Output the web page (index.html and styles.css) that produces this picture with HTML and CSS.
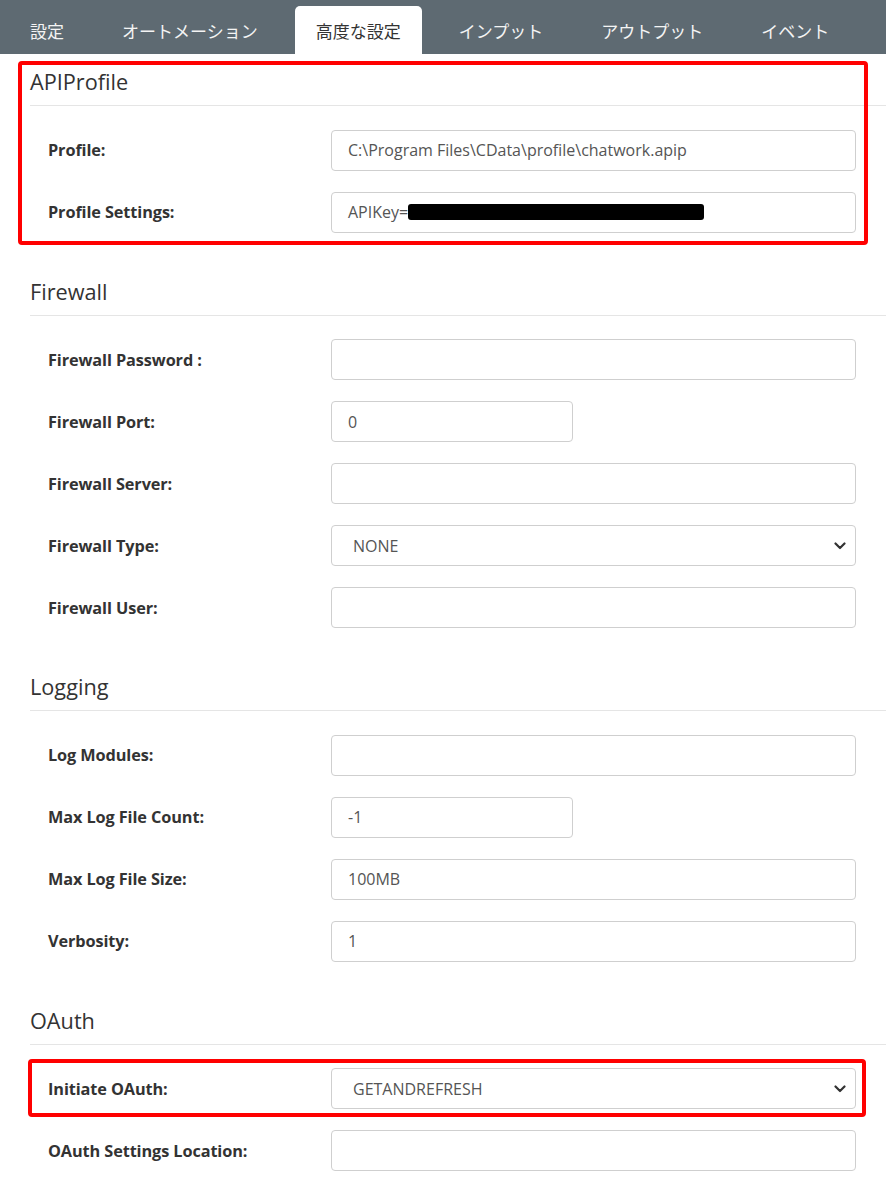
FILE: index.html
```html
<!DOCTYPE html>
<html lang="ja">
<head>
<meta charset="utf-8">
<title>高度な設定</title>
<link rel="stylesheet" href="styles.css">
</head>
<body>
<nav class="tabs">
  <span class="tab">設定</span>
  <span class="tab">オートメーション</span>
  <span class="tab active">高度な設定</span>
  <span class="tab">インプット</span>
  <span class="tab">アウトプット</span>
  <span class="tab">イベント</span>
</nav>
<main class="content">
  <section class="group">
    <h2 class="group-title">APIProfile</h2>
    <div class="fields">
      <div class="field"><span class="label">Profile:</span><div class="control">C:\Program Files\CData\profile\chatwork.apip</div></div>
      <div class="field"><span class="label">Profile Settings:</span><div class="control">APIKey=<span class="redact"></span></div></div>
    </div>
    <div class="callout callout-group"></div>
  </section>

  <section class="group">
    <h2 class="group-title">Firewall</h2>
    <div class="fields">
      <div class="field"><span class="label">Firewall Password :</span><div class="control"></div></div>
      <div class="field"><span class="label">Firewall Port:</span><div class="control narrow">0</div></div>
      <div class="field"><span class="label">Firewall Server:</span><div class="control"></div></div>
      <div class="field"><span class="label">Firewall Type:</span><div class="control select">NONE<svg class="chev" viewBox="0 0 12 8" width="12" height="8"><path d="M1.5 1.5 L6 6 L10.5 1.5" fill="none" stroke="#333" stroke-width="2.2" stroke-linecap="round" stroke-linejoin="round"/></svg></div></div>
      <div class="field"><span class="label">Firewall User:</span><div class="control"></div></div>
    </div>
  </section>

  <section class="group">
    <h2 class="group-title">Logging</h2>
    <div class="fields">
      <div class="field"><span class="label">Log Modules:</span><div class="control"></div></div>
      <div class="field"><span class="label">Max Log File Count:</span><div class="control narrow">-1</div></div>
      <div class="field"><span class="label">Max Log File Size:</span><div class="control">100MB</div></div>
      <div class="field"><span class="label">Verbosity:</span><div class="control">1</div></div>
    </div>
  </section>

  <section class="group">
    <h2 class="group-title">OAuth</h2>
    <div class="fields">
      <div class="field"><span class="label">Initiate OAuth:</span><div class="control select">GETANDREFRESH<svg class="chev" viewBox="0 0 12 8" width="12" height="8"><path d="M1.5 1.5 L6 6 L10.5 1.5" fill="none" stroke="#333" stroke-width="2.2" stroke-linecap="round" stroke-linejoin="round"/></svg></div><div class="callout callout-row"></div></div>
      <div class="field"><span class="label">OAuth Settings Location:</span><div class="control"></div></div>
    </div>
  </section>
</main>
</body>
</html>
```

FILE: styles.css
```css
* { box-sizing: border-box; }

body {
  margin: 0;
  background: #ffffff;
  font-family: "Open Sans", "Noto Sans", "Noto Sans CJK JP", sans-serif;
  color: #333333;
}

.tabs {
  display: flex;
  align-items: flex-end;
  gap: 16px;
  height: 54px;
  padding-left: 9px;
  background: #5e6a72;
}

.tab {
  display: flex;
  align-items: center;
  height: 48px;
  padding: 0 21px 0 21px;
  font-family: "Noto Sans CJK JP", sans-serif;
  font-size: 17px;
  color: #f4f4f4;
  border-radius: 5px 5px 0 0;
}

.tab.active {
  background: #ffffff;
  color: #333333;
}

.content {
  padding: 14px 0 0 30px;
}

.group {
  position: relative;
  margin-bottom: 45px;
}

.group-title {
  margin: 0;
  padding-bottom: 9px;
  font-size: 21.7px;
  line-height: 28px;
  font-weight: 400;
  color: #333333;
  border-bottom: 1px solid #e5e5e5;
}

.fields {
  display: flex;
  flex-direction: column;
  gap: 21px;
  padding: 23.5px 30px 0 18px;
}

.field {
  position: relative;
  display: grid;
  grid-template-columns: 283px 1fr;
  align-items: center;
}

.label {
  font-size: 16.3px;
  font-weight: 700;
  color: #333333;
  letter-spacing: -0.1px;
}

.control {
  position: relative;
  display: flex;
  align-items: center;
  height: 41px;
  padding-left: 16px;
  border: 1px solid #cfcfcf;
  border-radius: 4px;
  font-size: 16px;
  color: #555555;
  background: #ffffff;
}

.control.narrow {
  width: 242px;
}

.control.select {
  padding-left: 21px;
  font-size: 16px;
}

.chev {
  position: absolute;
  right: 9px;
  top: 16px;
}

.redact {
  display: inline-block;
  width: 296px;
  height: 16px;
  background: #000000;
  border-radius: 3px;
  vertical-align: middle;
}

.callout {
  position: absolute;
  border: 4px solid #ff0000;
  border-radius: 4px;
  pointer-events: none;
}

.callout-group {
  left: -12px;
  right: 18px;
  top: -7px;
  bottom: -12px;
}

.callout-row {
  left: -20px;
  right: -10px;
  top: -9px;
  bottom: -8px;
}
```
